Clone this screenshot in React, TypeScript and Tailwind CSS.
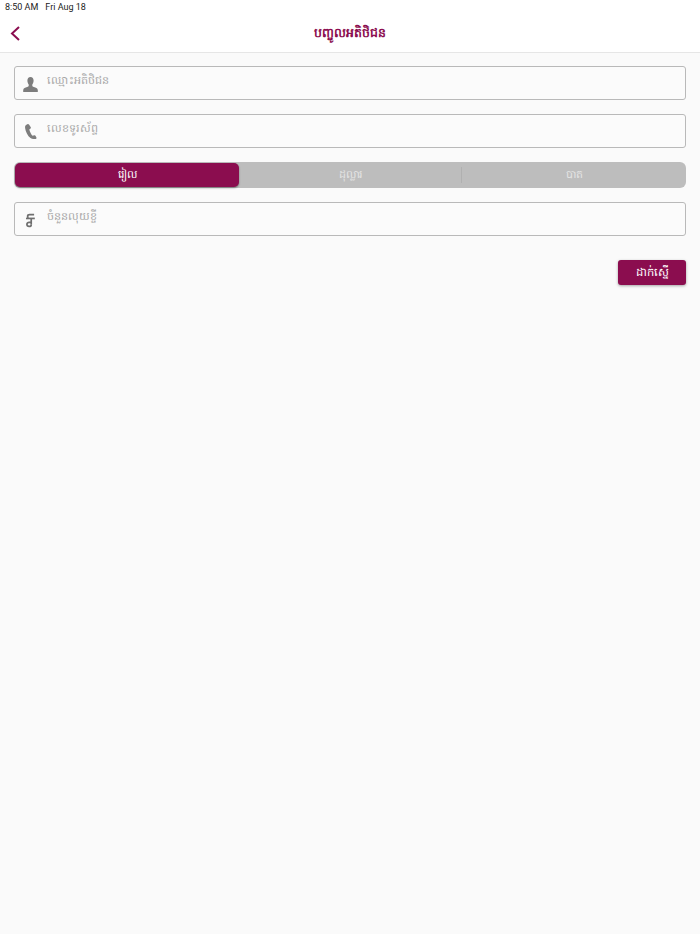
import React from 'react';

const Field: React.FC<{ icon: React.ReactNode; placeholder: string }> = ({ icon, placeholder }) => (
  <div className="h-[34px] flex items-center border border-[#b9b9b9] rounded-[3px] bg-[#fbfbfb]">
    <div className="w-[31px] flex justify-center shrink-0 pt-[2px]">{icon}</div>
    <span className="ml-[1px] mb-[5px] text-[11.2px] leading-[20px] text-[#a8a8a8]">{placeholder}</span>
  </div>
);

const PersonIcon = () => (
  <svg width="15" height="15" viewBox="0 0 15 15" fill="#7d7d7d">
    <path d="M7.500 0C5.500 0 4.400 1.500 4.400 3.600c0 1.600.6 3 1.300 3.900v1.300c0 .5-.5.9-1.600 1.300C2.300 10.800.4 11.400.2 13v2h14.600v-2c-.2-1.600-2.100-2.200-3.900-2.900-1.100-.4-1.600-.8-1.600-1.300V7.500c.7-.9 1.300-2.300 1.300-3.900C10.600 1.500 9.500 0 7.500 0z" />
  </svg>
);

const PhoneIcon = () => (
  <svg className="mb-[2px]" width="12" height="15" viewBox="0 0 12 15" fill="#7d7d7d">
    <path d="M2.400.2 1 1C.2 1.500 0 2.600.1 4c.4 3.600 2.600 8 5.400 10.100.9.700 2 .9 3 .9h2.200c.7 0 1.100-.7.800-1.300l-1-1.900c-.3-.5-.8-.7-1.300-.5l-1.600.5C6.300 10.500 4.800 7.600 4.300 5.400l1.200-.9c.4-.3.500-.8.300-1.300L4 .6C3.700.1 3-.1 2.400.2z" />
  </svg>
);

const RielIcon = () => (
  <svg width="9" height="15" viewBox="0 0 10 15" fill="none" stroke="#6f6f6f" strokeWidth="1.900">
    <path d="M9 .9H4C2.600.9 1.800 1.600 1.800 2.700c0 .8.300 1.400.8 1.900" />
    <path d="M0 5.200h9.800" />
    <path d="M5.800 5.200v7" />
    <path d="M5.800 9.500H3.500C2 9.500 1 10.500 1 11.800 1 13.200 2.100 14.100 3.500 14.100c1.300 0 2.300-.8 2.300-2" />
  </svg>
);

const App: React.FC = () => {
  return (
    <div className="w-[700px] h-[934px] bg-[#fafafa] font-['Roboto','Noto_Sans',sans-serif]">
      {/* Status + nav */}
      <div className="h-[53px] bg-white border-b border-[#e6e6e6]">
        <div className="h-[14px] pt-[1px] pl-[5px] flex items-center gap-[7px] text-[9px] text-[#222]">
          <span>8:50 AM</span>
          <span>Fri Aug 18</span>
        </div>
        <div className="relative h-[38px] flex items-center justify-center">
          <svg className="absolute left-[10px] top-[12px]" width="11" height="15" viewBox="0 0 11 15" fill="none" stroke="#8b0d4f" strokeWidth="2">
            <path d="M9 1 2 7.500 9 14" />
          </svg>
          <span className="text-[12.5px] font-bold text-[#8b0d4f]">បញ្ចូលអតិថិជន</span>
        </div>
      </div>

      {/* Form */}
      <div className="px-[14px] pt-[13px] flex flex-col">
        <Field icon={<PersonIcon />} placeholder="ឈ្មោះអតិថិជន" />
        <div className="mt-[14px]">
          <Field icon={<PhoneIcon />} placeholder="លេខទូរស័ព្ទ" />
        </div>

        <div className="mt-[14px] h-[26px] rounded-[6px] bg-[#bdbdbd] flex items-center text-[11px] text-[#e4e4e4]">
          <div className="ml-[1px] w-[224px] h-[24px] rounded-[5px] bg-[#8b0d4f] text-white flex items-center justify-center shadow-[0_1px_2px_rgba(0,0,0,0.4)]">រៀល</div>
          <div className="flex-1 flex items-center justify-center">ដុល្លារ</div>
          <div className="h-[16px] w-px bg-[#b0b0b0]" />
          <div className="w-[224px] flex items-center justify-center">បាត</div>
        </div>

        <div className="mt-[14px]">
          <Field icon={<RielIcon />} placeholder="ចំនួនលុយខ្ចី" />
        </div>

        <div className="mt-[24px] flex justify-end">
          <button className="w-[68px] h-[25px] rounded-[3px] bg-[#8b0d4f] text-white text-[11.5px] shadow-[0_1px_3px_rgba(0,0,0,0.35)]">ដាក់ស្នើ</button>
        </div>
      </div>
    </div>
  );
};

export default App;
